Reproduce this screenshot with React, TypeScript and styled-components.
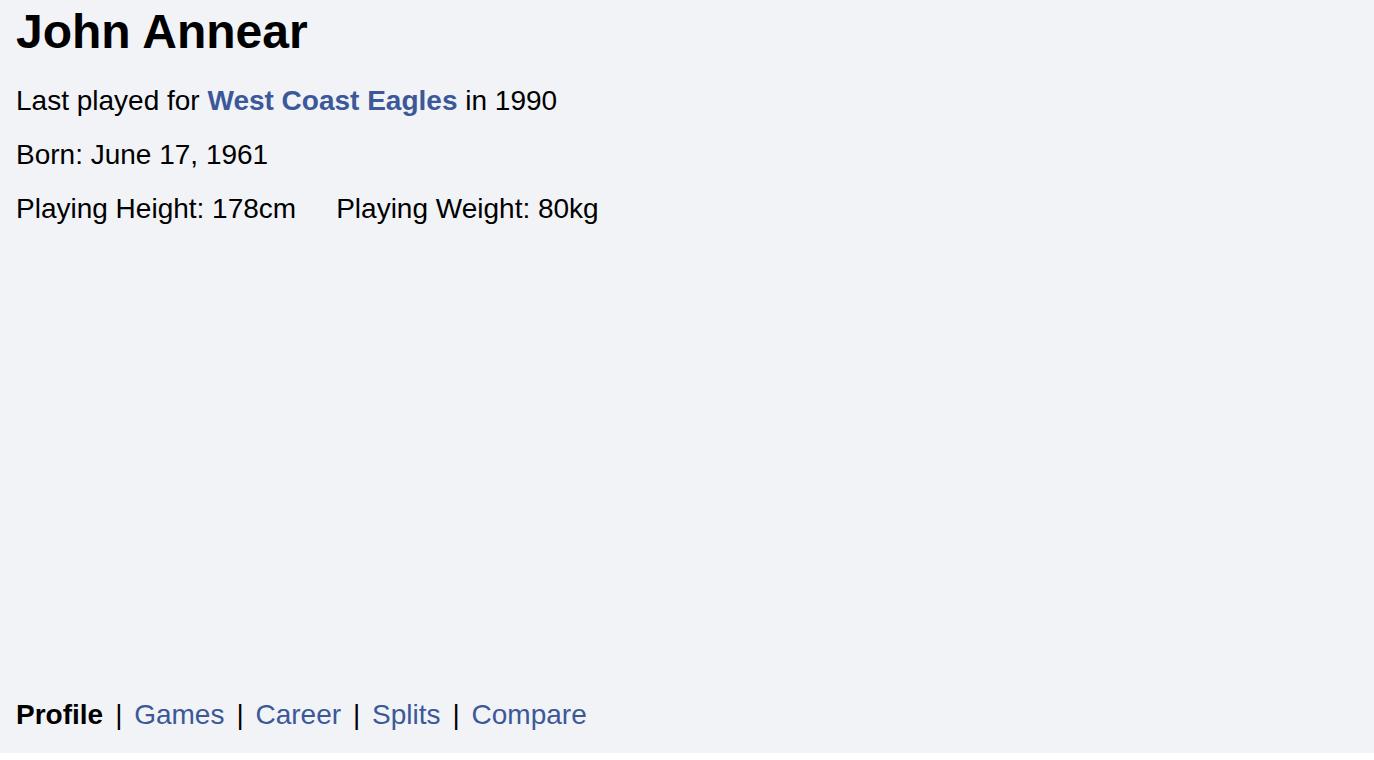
import React from "react";
import styled, { createGlobalStyle } from "styled-components";

const Global = createGlobalStyle`
  html, body { margin: 0; padding: 0; background: #ffffff; }
  body { font-family: "Liberation Sans", Arial, sans-serif; color: #000; }
`;

const Panel = styled.main`
  box-sizing: border-box;
  height: 753px;
  background: #f2f3f7;
  padding: 0 16px 22px;
  display: flex;
  flex-direction: column;
`;

const Name = styled.h1`
  margin: 0;
  padding-top: 4px;
  font-size: 48px;
  font-weight: 700;
  line-height: 55px;
`;

const Info = styled.p<{ $first?: boolean }>`
  margin: 0;
  margin-top: ${(p) => (p.$first ? "26px" : "22px")};
  font-size: 28px;
  line-height: 32px;
`;

const TeamLink = styled.a`
  color: #3b5998;
  font-weight: 700;
  text-decoration: none;
`;

const Gap = styled.span`
  display: inline-block;
  width: 40px;
`;

const Nav = styled.nav`
  margin-top: auto;
  font-size: 28px;
  line-height: 32px;
  display: flex;
  align-items: baseline;
  white-space: pre;
`;

const Current = styled.strong`
  font-weight: 700;
`;

const NavLink = styled.a`
  color: #3b5998;
  text-decoration: none;
`;

const Sep = styled.span`
  padding: 0 11.75px 0 12px;
`;

export default function App() {
  const links = ["Games", "Career", "Splits", "Compare"];
  return (
    <>
      <Global />
      <Panel>
        <Name>John Annear</Name>
        <Info $first>
          Last played for <TeamLink href="#">West Coast Eagles</TeamLink> in 1990
        </Info>
        <Info>Born: June 17, 1961</Info>
        <Info>
          Playing Height: 178cm
          <Gap />
          Playing Weight: 80kg
        </Info>
        <Nav>
          <Current>Profile</Current>
          {links.map((l) => (
            <React.Fragment key={l}>
              <Sep>|</Sep>
              <NavLink href="#">{l}</NavLink>
            </React.Fragment>
          ))}
        </Nav>
      </Panel>
    </>
  );
}
